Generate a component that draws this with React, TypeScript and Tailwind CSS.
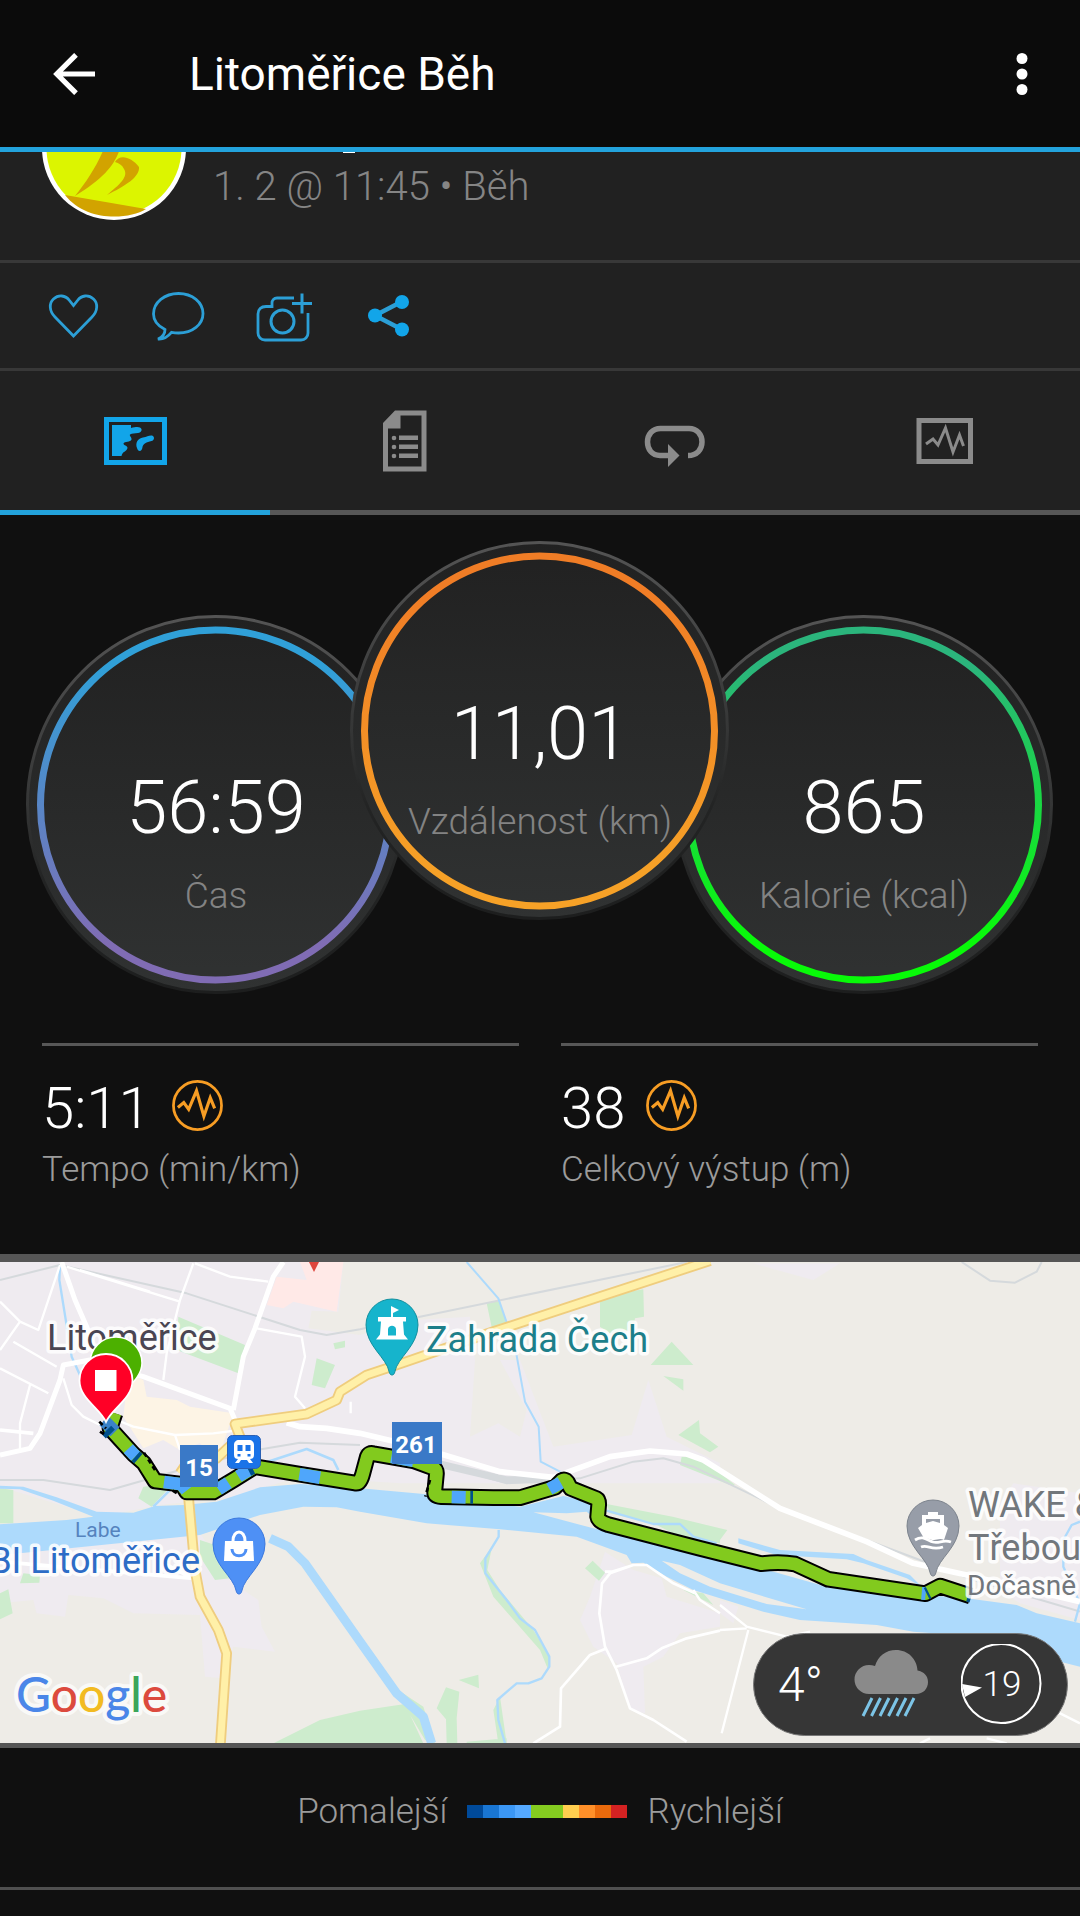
import type { ReactNode } from 'react';

interface GaugeProps {
    id: string;
    value: string;
    label: string;
    from: string;
    to: string;
    className: string;
}

const Gauge = ({ id, value, label, from, to, className }: GaugeProps) => (
    <div className={`relative h-[380px] w-[380px] shrink-0 text-center ${className}`}>
        <svg viewBox="0 0 380 380" className="absolute inset-0 h-full w-full" aria-hidden="true">
            <defs>
                <linearGradient id={`${id}-ring`} x1="0" y1="0" x2="0" y2="1">
                    <stop offset="0.1" stopColor={from} />
                    <stop offset="0.9" stopColor={to} />
                </linearGradient>
                <linearGradient id={`${id}-face`} x1="0" y1="0" x2="0" y2="1">
                    <stop offset="0" stopColor="#212121" />
                    <stop offset="1" stopColor="#303232" />
                </linearGradient>
                <linearGradient id={`${id}-rim`} x1="0" y1="0" x2="0" y2="1">
                    <stop offset="0" stopColor="#545454" />
                    <stop offset="0.5" stopColor="#353636" />
                    <stop offset="0.7" stopColor="#232424" />
                    <stop offset="1" stopColor="#1d1e1e" />
                </linearGradient>
            </defs>
            <circle cx="189.500" cy="189.500" r="188" fill={`url(#${id}-face)`} stroke={`url(#${id}-rim)`} strokeWidth="3" />
            <circle cx="189.500" cy="190" r="175" fill="none" stroke={`url(#${id}-ring)`} strokeWidth="7" />
        </svg>
        <div className="relative pt-[149px]">
            <div className="text-[74px] leading-[88px] text-white">{value}</div>
            <div className="mt-5 text-[37px] leading-[48px] whitespace-nowrap text-[#838383]">{label}</div>
        </div>
    </div>
);

const GraphBadge = () => (
    <svg viewBox="0 0 52 52" className="h-[51px] w-[51px]" fill="none" stroke="#f79d24">
        <circle cx="26" cy="26" r="24.500" strokeWidth="2.800" />
        <path d="M6 28l6-5 5 7 8-19 7.500 26 6.500-19 4.500 11" strokeWidth="3.200" />
    </svg>
);

const Stat = ({ value, label }: { value: string; label: string }) => (
    <div className="border-t-[3px] border-[#575757] pt-7">
        <div className="flex items-start gap-[21px]">
            <span className="text-[58px] leading-[68px] text-white">{value}</span>
            <button type="button" aria-label={`Graf: ${label}`} className="mt-1.5">
                <GraphBadge />
            </button>
        </div>
        <div className="mt-1.5 text-[35px] leading-[44px] text-[#9b9b9b]">{label}</div>
    </div>
);

const actions: { name: string; icon: ReactNode }[] = [
    {
        name: 'To se mi líbí',
        icon: (
            <path
                d="M29.500 50L11 31C5 25 5 17 9.500 13c5-4.500 12-4 16 1.500l4 5 4-5C37.500 9 44.500 8.500 49.500 13c4.500 4 4.500 12-1.500 18z"
                strokeWidth="2.8"
            />
        ),
    },
    {
        name: 'Komentář',
        icon: (
            <path
                d="M16 43.500C8 39.500 4.500 34 4.500 28 4.500 16.500 15.500 7.500 29.500 7.500S54 16.500 54 27.500 43.500 47 29.500 47c-3 0-5-.3-7-.7C19 50.500 14.500 53.500 9 53c5-2 7-5 7-9.500z"
                strokeWidth="2.8"
            />
        ),
    },
    {
        name: 'Přidat fotku',
        icon: (
            <>
                <path
                    d="M40 12H23c-3 0-5 2-5 5v3.500h-6c-5 0-8 3-8 7.500v19c0 4 3 7 7 7h36c4 0 7-3 7-7V27"
                    strokeWidth="2.8"
                />
                <circle cx="28.500" cy="35.500" r="11.500" strokeWidth="3" />
                <path d="M48 7.500v20M38 17.500h20" strokeWidth="3" />
            </>
        ),
    },
    {
        name: 'Sdílet',
        icon: (
            <>
                <path d="M16 29.500l27-14M16 29.500l27 14" strokeWidth="4.500" />
                <circle cx="16" cy="29.500" r="7" fill="#12a5e9" stroke="none" />
                <circle cx="43" cy="16" r="7" fill="#12a5e9" stroke="none" />
                <circle cx="43" cy="43.500" r="7" fill="#12a5e9" stroke="none" />
            </>
        ),
    },
];

const tabs: { name: string; icon: ReactNode }[] = [
    {
        name: 'Mapa',
        icon: (
            <g fill="#12a5e9">
                <rect x="6.500" y="10.500" width="58" height="43" fill="none" stroke="#12a5e9" strokeWidth="5" />
                <path d="M12 16h19v3c4-1 7-1.500 9-.5 3 1.500 1.500 5-2 5.500-3 .5-6 0-8 1.500-1 1 2 3 1.500 5-1 3-7 1.500-8 4 0 2 4 2 4 4.500-1 4-5 3-6 8h-9.500z" />
                <path d="M37 39c-2-5 1-10 6-10.500 4-.5 6-2.500 9-2 3 1 2.500 5-.5 5.500-5 1-8.500 3-9 6-.5 5-4.500 5-5.500 1z" />
            </g>
        ),
    },
    {
        name: 'Statistiky',
        icon: (
            <g fill="#8b8b8b">
                <path fillRule="evenodd" d="M25 1.500h31.500v61H13V14zM30.500 6.500v13H18v38h33.500v-51z" />
                <circle cx="24" cy="29" r="2.300" />
                <circle cx="24" cy="38" r="2.300" />
                <circle cx="24" cy="47" r="2.300" />
                <path d="M29 26.500h19V31H29zM29 35.500h19V40H29zM29 44.500h19V49H29z" />
            </g>
        ),
    },
    {
        name: 'Okruhy',
        icon: (
            <g>
                <path
                    d="M29 46.500h-9c-8 0-12.500-6-12.500-13.500s5-13.500 13-13.500h28.500c8 0 13 6 13 13.500s-5 13.500-14 13.500"
                    fill="none"
                    stroke="#8b8b8b"
                    strokeWidth="5.500"
                />
                <path d="M28 35L39.500 46.500 28 58z" fill="#8b8b8b" />
            </g>
        ),
    },
    {
        name: 'Grafy',
        icon: (
            <g fill="none" stroke="#8b8b8b">
                <rect x="9" y="11.500" width="51.500" height="41" strokeWidth="5" />
                <path d="M16 35l7-5 5 6 7.500-17L43 43l6.500-17 4 11" strokeWidth="3" />
            </g>
        ),
    },
];

const legendColors = [
    'bg-[#004a9a]',
    'bg-[#1976d3]',
    'bg-[#3b97f5]',
    'bg-[#55a9ff]',
    'bg-[#84cc20]',
    'bg-[#84cc20]',
    'bg-[#ffce4f]',
    'bg-[#ff9029]',
    'bg-[#ea6a0c]',
    'bg-[#d42222]',
];

const ROUTE =
    'M345 490L330 535 400 612 432 640 465 693 545 703 560 726 640 726 700 690 765 650 900 673 1065 699 Q1080 702 1088 672L1102 620 Q1107 608 1120 611L1240 632 1300 654 Q1311 659 1309 675L1304 728 Q1304 738 1325 740L1480 743 1560 743 1665 712 1685 692 Q1695 686 1702 696L1712 715 1790 746 Q1797 750 1796 765L1793 800 Q1795 815 1825 824L2100 895 2160 910 2283 941 Q2340 934 2385 942L2485 988 2777 1031 2820 1008 2912 1038';

const Terrain = () => (
    <g transform="translate(0 -12) scale(0.333333)" fill="none" strokeLinejoin="round">
        <rect x="0" y="36" width="3240" height="1450" fill="#eeece7" />

        {/* built-up areas */}
        <g fill="#efebf0">
            <path d="M0 36H1030L1015 185 935 182 925 235 1080 255 1240 210 1410 200 1425 330 1410 560 1495 520 1560 560 1580 480 1500 330 1560 330 1660 590 1895 555 1945 390 2000 560 2080 600 2160 640V700H1200L900 680 700 740 480 765 300 800 0 710z" />
            <path d="M0 915L600 850 700 1000 775 1050 785 1130 825 1205 700 1190 670 1285 615 1280 600 1095 400 1090 310 1045 205 1035 195 1100 110 1090 100 1050 0 1060z" />
            <path d="M1815 905L1900 960 1985 985 2000 1040 2160 1090 2160 1130 2040 1150 1990 1220 1930 1250 1935 1390 1890 1380 1850 1240 1780 1190 1740 1110 1770 1040z" />
            <path d="M2160 1050L2215 1070 2200 1120 2160 1090zM2260 40H2520L2440 90 2330 60zM3000 760L3040 700 3240 730V1110L3060 1060 3000 1020z" />
        </g>
        <path d="M900 36H1030L1010 185 880 155 850 175 800 165 830 80 920 90z" fill="#ffe9e7" />
        <path d="M385 370L430 390 440 440 530 450 570 470 700 490 690 520 650 640 600 580 540 600 490 570 430 595 370 500z" fill="#fdf4e5" />

        {/* parks */}
        <g fill="#cdeccd">
            <path d="M535 200L735 285 715 370 530 300zM950 325L1005 345 975 415 935 405zM1000 280L1035 272 1035 292 1005 298zM0 715L40 720V820H0zM430 710L520 700 455 770 415 745zM600 870L690 900 690 985 645 990 600 920zM0 1030L25 1018 38 1090 0 1108zM70 970L120 975 118 998 60 1000z" />
            <path d="M1460 160L1495 150 1525 230 1480 255zM1800 140L1930 118 1932 200 1905 205 1900 240 1830 250 1800 230zM1952 345L2015 275 2080 345zM1990 378L2050 388V422zM2035 555L2097 510 2100 550 2155 590 2130 607zM1755 955L1778 932 1815 968 1797 992zM1820 762L2018 800 2160 835V880L2040 860 1960 820 1830 790zM2045 620L2100 622 2205 705 2190 705 2040 645z" />
            <path d="M820 1480L960 1410 1080 1382 1215 1362 1270 1480zM1310 1375L1338 1312 1378 1325 1370 1405 1372 1480H1340L1338 1408zM1376 1290L1435 1274 1437 1315zM1180 1310L1270 1370 1305 1480 1275 1470zM1440 940L1476 890 1462 960 1500 1020 1600 1140 1650 1220 1645 1260 1620 1200 1550 1120 1480 1040zM1480 1380L1500 1340 1520 1480H1495zM2050 1020L2110 1030 2140 1065zM2160 835L2182 840 2160 870zM1400 1475L1520 1465V1480H1400z" />
        </g>

        {/* railway */}
        <g stroke="#d5d9dc" strokeWidth="6">
            <path d="M0 90L180 45 560 130 900 240 980 255 1080 238 1260 200 2060 36" />
            <path d="M0 690L130 690 330 720 540 660 770 600 900 578 1080 585" />
            <path d="M1080 600L1310 640 1520 700 1740 685 1900 635 1990 625 2080 650 2360 785 2600 870 2920 990 3240 1085" />
            <path d="M1310 640L1520 690 1660 688" strokeWidth="22" />
            <path d="M2885 36L2970 92 3045 98 3110 65 3125 36" />
        </g>

        {/* water */}
        <path
            fill="#addafc"
            d="M0 707L70 710 170 742 290 785 400 788 465 768 550 765 650 755 780 712 900 702 1080 715 1280 733 1400 752 1560 770 1690 738 1790 760 1840 830 2160 920 2480 1010 2900 1045 3050 1065 3110 1090 3240 1120V1250L3160 1230 2950 1160 2740 1145 2630 1125 2400 1110 2290 1085 2160 1045 2080 1020 2000 980 1930 938 1895 940 1880 915 1730 860 1500 838 1280 820 1080 785 1010 772 910 770 780 795 690 825 600 855 90 907 0 915V823L200 810 280 800 160 752 60 718 0 716z"
        />
        <path d="M1985 932L2040 945 2160 1000 2420 1078 2300 1062 2130 1010 2040 970zM1600 787L1700 790 1760 785 1830 845 1780 835z" fill="#eeece7" />
        <g stroke="#addafc">
            <path d="M810 865L865 890 915 940 1080 1175 1190 1330 1270 1400 1295 1480" strokeWidth="27" />
            <path d="M180 45L178 90 215 320 260 420" strokeWidth="7" />
            <path d="M1400 36L1495 145 1545 290 1575 455 1616 530 1622 635 1680 665 1710 690" strokeWidth="6" />
            <path d="M1496 840V860L1456 925V970L1520 1050 1560 1105 1605 1140 1648 1220V1250L1625 1285 1585 1300 1550 1300 1492 1350 1495 1410 1515 1480" strokeWidth="7" />
            <path d="M1820 782L1960 822 2040 822 2080 860 2150 880" strokeWidth="7" />
            <path d="M790 640L920 597 1000 630 1015 660M460 770L520 710" strokeWidth="8" />
            <path d="M3240 815L3215 825 3190 870V950L3240 1060 3225 1115" strokeWidth="7" />
        </g>
        <path d="M2215 865L2340 900 2560 912 2600 930 2730 975 2765 1010 2720 985 2590 940 2540 928 2330 915 2215 880z" fill="#addafc" />

        {/* white streets */}
        <g stroke="#fff">
            <g strokeWidth="7">
                <path d="M180 45L115 240 60 215 0 155M60 215L0 300M40 275L170 350M90 405L60 520V600M0 355L145 430M200 50L540 155M450 125L240 60M580 40L540 150 500 310 490 390M585 40L690 80 805 95M770 235L905 260 915 320 885 440 915 475M190 385L215 465 250 500 300 525M350 510L400 530 525 555 640 550 720 540M525 555L540 600M1052 455V490" />
                <path d="M2160 1065L2240 1130 2360 1160 2430 1145M2245 1140L2165 1450M2080 1020L2100 1050 2160 1090M2160 1140L2240 1135M3040 1410L3080 1370 3170 1385 3240 1420M2760 1480L2790 1465M2960 1465L3020 1480" />
            </g>
            <g strokeWidth="11">
                <path d="M1815 965L1835 965 1900 945 1940 945 2020 1000 2085 1030M1900 945L1830 970 1806 1000 1798 1090 1815 1190 1850 1260 1890 1375 1960 1410 2060 1475M1815 1197L1770 1215 1683 1315 1680 1430 1600 1480M1848 1250L1940 1225 1985 1195 2060 1165 2160 1142" strokeWidth="8" />
                <path d="M500 945L580 985 0 935M0 540L100 550" />
            </g>
            <path d="M185 36L225 150 260 230 300 345 430 380 690 475 705 510M270 330L190 345 180 390 120 550 90 595 0 615M850 36L820 80 765 235 730 320 700 480" strokeWidth="15" />
            <path d="M860 518L900 530 980 535 1080 550 1250 590 1500 665 1660 682 1830 620 1950 603 2060 612 2110 630 2340 775 2600 875 2740 940 2900 975 3240 1055" strokeWidth="17" />
        </g>

        {/* main roads */}
        <g stroke="#efcd7e" strokeWidth="32">
            <path d="M565 735L585 960 600 1040 655 1140 680 1210 660 1500" />
            <path d="M540 670L560 640 650 625 720 560 705 522 920 492 1010 450 1020 425 1100 375 1190 345 1480 245 1800 140 2130 32" />
        </g>
        <g stroke="#fff0a8" strokeWidth="21">
            <path d="M565 735L585 960 600 1040 655 1140 680 1210 660 1500" />
            <path d="M540 670L560 640 650 625 720 560 705 522 920 492 1010 450 1020 425 1100 375 1190 345 1480 245 1800 140 2130 32" />
        </g>
    </g>
);

const Route = () => (
    <g transform="translate(0 -12) scale(0.333333)" fill="none" strokeLinejoin="round">
        <path d={ROUTE} stroke="#000" strokeWidth="50" />
        <path d={ROUTE} stroke="#82ca1e" strokeWidth="38" />
        <g stroke="#4fa6fb" strokeWidth="38">
            <path d="M385 596L407 619M492 696L545 703 560 722M655 718L685 698M715 679L750 658M898 673L960 683M1174 620L1240 632M1355 741L1397 742M1648 717L1682 698M2765 1030L2777 1031" />
            <path d="M312 512L345 545" stroke="#3a82c9" />
        </g>
        <g stroke="#00508c" strokeWidth="38">
            <path d="M320 541L331 552M407 619L415 626M1411 742L1419 742M2780 1031L2786 1028" />
            <path d="M745 660L757 654M2904 1036L2914 1039" />
        </g>
        <path d="M298 515L318 535M300 545L312 553M432 608L466 662M518 722L540 735M1290 690L1276 740" stroke="#000" strokeWidth="8" strokeDasharray="14 10" />
    </g>
);

const Pin = ({ x, y, fill, rim, children }: { x: number; y: number; fill: string; rim: string; children: ReactNode }) => (
    <g transform={`translate(${x} ${y})`}>
        <path
            d="M0 0C-1.500 0-2.300-1-2.800-3-5-17-26-29-26-50a26 26 0 0 1 52 0C26-29 5-17 2.800-3 2.300-1 1.500 0 0 0z"
            fill={fill}
            stroke={rim}
        />
        {children}
    </g>
);

const ActivityMap = () => (
    <svg viewBox="0 0 1080 481" className="block w-full" role="img" aria-label="Mapa trasy">
        <Terrain />
        <path d="M309 0h10l-5 10z" fill="#de453c" />

        <g stroke="#fff" strokeOpacity="0.85" strokeWidth="7" strokeLinejoin="round" paintOrder="stroke" fontSize="36">
            <text x="47" y="88" fill="#4a4552">Litoměřice</text>
            <text x="426" y="90" fill="#1d7f8a">Zahrada Čech</text>
            <text x="200" y="311" textAnchor="end" fill="#2d6cc6">OBI Litoměřice</text>
            <text x="968" y="255" fill="#72777c">WAKE &amp;</text>
        </g>
        <text x="75" y="275" fontSize="21" fill="#5583be">Labe</text>

        <Route />

        <g stroke="#fff" strokeOpacity="0.85" strokeWidth="7" strokeLinejoin="round" paintOrder="stroke">
            <text x="968" y="298" fontSize="36" fill="#72777c">Třeboutice</text>
            <text x="967" y="333" fontSize="28" fill="#72777c">Dočasně</text>
        </g>

        {/* start and finish */}
        <path
            d="M116 142C113 130 90 119 90 101a26 26 0 0 1 52 0c0 18-23 29-26 41z"
            fill="#4cb000"
            stroke="#fff"
            strokeWidth="1.500"
        />
        <path
            d="M106 160C100 146 79.500 137 79.500 118.500a26.500 26.500 0 0 1 53 0c0 18.500-20.500 27.500-26.500 41.500z"
            fill="#ff0026"
            stroke="#fff"
            strokeWidth="1.800"
        />
        <rect x="95" y="108" width="21.500" height="21" fill="#fff" />

        {/* places */}
        <Pin x={392} y={113} fill="#16b4cc" rim="#12909f">
            <path
                fillRule="evenodd"
                d="M-1-69l8 4-6 3v4h13v4.500h-3l1 13 4 5h-32l4-5 1-13h-3V-58H-1zM-4-39.500h8v-6c0-5-8-5-8 0z"
                fill="#fff"
            />
        </Pin>
        <Pin x={239} y={332} fill="#4e90f5" rim="#3b78dd">
            <path d="M-14-53h28l1 20h-30z" fill="#fff" />
            <path d="M-6-53c0-12 12-12 12 0" fill="none" stroke="#fff" strokeWidth="3" />
            <path d="M-7-45c0 9 14 9 14 0" fill="none" stroke="#4e90f5" strokeWidth="3" />
        </Pin>
        <Pin x={933} y={314} fill="#979da8" rim="#7c838d">
            <path
                fillRule="evenodd"
                d="M-5-64H5v3h6v10l4 3-4 12c-4-2-7 0-10 0-4 0-6-3-9 0l-7-12 4-3v-10h6zM-7-57v4L0-55l7 2v-4z"
                fill="#fff"
            />
            <path d="M-18-36c8-5 12 0 18 2s10-3 18 0M-12-29c7-3 10 4 22 0" fill="none" stroke="#fff" strokeWidth="2.800" />
        </Pin>

        {/* transit and road shields */}
        <rect x="227.500" y="173.500" width="33" height="33" rx="5" fill="#1a73e8" stroke="#2a5fb4" />
        <path
            fillRule="evenodd"
            d="M239 178h10c3 0 5 2 5 5v10c0 3-2 4-4 4l3 4h-4l-2-3h-6l-2 3h-4l3-4c-2 0-4-1-4-4v-10c0-3 2-5 5-5zM237.500 183v6h5v-6zM245.500 183v6h5v-6zM237.500 192v2.500h3V192zM247.500 192v2.500h3V192z"
            fill="#fff"
        />
        <g fill="#3a79c7">
            <path d="M180 183h38v42h-38zM392 160h50v42h-50z" />
        </g>
        <g fill="#fff" fontSize="24" fontWeight="700" textAnchor="middle">
            <text x="199" y="214">15</text>
            <text x="416" y="191">261</text>
        </g>

        <text
            x="16"
            y="450"
            fontSize="48"
            className="font-['Lato']"
            fontWeight="500"
            stroke="#fff"
            strokeOpacity="0.7"
            strokeWidth="8"
            strokeLinejoin="round"
            paintOrder="stroke"
        >
            <tspan fill="#4a86e8">G</tspan>
            <tspan fill="#dc4a3e">o</tspan>
            <tspan fill="#f2bb22">o</tspan>
            <tspan fill="#4a86e8">g</tspan>
            <tspan fill="#3ba55a">l</tspan>
            <tspan fill="#dc4a3e">e</tspan>
        </text>
    </svg>
);

const Weather = () => (
    <div className="absolute right-3 bottom-[7px] flex h-[103px] w-[315px] items-center justify-between rounded-full border border-[#777] bg-[#363636] px-6 text-white">
        <span className="text-[48px] leading-[56px]">4°</span>
        <svg viewBox="0 0 76 70" className="h-[70px] w-[76px]" aria-hidden="true">
            <path d="M15 44a14.500 14.500 0 0 1 0-29c2 0 4 .3 6 1C24 6 32 0 42 0c12 0 21 9 21.500 20.500C70 21.500 74 26 74 32c0 7-5 12-12 12z" fill="#8a8a8a" />
            <path d="M18 48L9 66M26.500 48l-9 18M35 48l-9 18M43.500 48l-9 18M52 48l-9 18M60 48l-9 18" stroke="#7cc4e6" strokeWidth="3" />
        </svg>
        <div className="relative flex h-[82px] w-[82px] items-center justify-center">
            <svg viewBox="0 0 82 82" className="absolute inset-0 h-full w-full" aria-hidden="true">
                <circle cx="40" cy="39.500" r="39.500" fill="none" stroke="#fff" strokeWidth="2" />
                <path d="M1 40l20 3.500L4 53z" fill="#fff" />
            </svg>
            <span className="relative text-[35px] leading-[44px]">19</span>
        </div>
    </div>
);

export default function App() {
    return (
        <div className="min-h-screen bg-[#101010] font-['Roboto',sans-serif] font-light">
            <header className="flex h-[152px] items-center border-b-[5px] border-[#23a3dc] bg-[#0b0b0b] text-white">
                <button type="button" aria-label="Zpět" className="ml-11 flex h-[60px] w-[60px] items-center justify-center">
                    <svg viewBox="0 0 42 42" className="h-[42px] w-[42px]" fill="none" stroke="#fff" strokeWidth="5.200">
                        <path d="M42 21H4M23 1.800L3.800 21 23 40.200" />
                    </svg>
                </button>
                <h1 className="flex-1 pl-[85px] text-[46px] leading-[56px] font-normal">Litoměřice Běh</h1>
                <button type="button" aria-label="Další možnosti" className="mr-7 flex h-[60px] w-[60px] items-center justify-center">
                    <svg viewBox="0 0 12 44" className="h-11 w-3" fill="#fff">
                        <circle cx="6" cy="6.500" r="5.500" />
                        <circle cx="6" cy="22" r="5.500" />
                        <circle cx="6" cy="37.500" r="5.500" />
                    </svg>
                </button>
            </header>

            <section className="bg-[#212121]">
                <div className="flex h-[111px] items-start overflow-hidden border-b-[3px] border-[#383838] pl-[42px]">
                    <svg viewBox="0 0 144 144" className="-mt-[76px] h-36 w-36 shrink-0" role="img" aria-label="Běh">
                        <circle cx="72" cy="72" r="72" fill="#fff" />
                        <circle cx="72" cy="72" r="67.500" fill="#dcf500" />
                        <path d="M63 70h16c-6 18-14 30-46 50 12-15 22-30 30-50z" fill="#d2a300" />
                        <path d="M73 86c4-8 16-6 24 5 1 10-14 19-32 28 12-10 22-18 17-26-2-4-5-6-9-7z" fill="#d2a300" />
                        <path d="M23 119l81 14C86 144 44 146 23 119z" fill="#d2a300" />
                    </svg>
                    <div className="pl-[27px]">
                        <div className="ml-[130px] h-px w-3 bg-white" />
                        <p className="mt-2.5 text-[40px] leading-[48px] text-[#858585]">1. 2 @ 11:45 • Běh</p>
                    </div>
                </div>

                <div className="flex h-[108px] border-b-[3px] border-[#383838] pl-[21px]">
                    {actions.map((action) => (
                        <button
                            key={action.name}
                            type="button"
                            aria-label={action.name}
                            className="flex w-[105px] items-center justify-center"
                        >
                            <svg viewBox="0 0 60 60" className="h-[60px] w-[60px]" fill="none" stroke="#2c9fd6">
                                {action.icon}
                            </svg>
                        </button>
                    ))}
                </div>

                <nav className="grid grid-cols-4">
                    {tabs.map((tab, i) => (
                        <button
                            key={tab.name}
                            type="button"
                            aria-label={tab.name}
                            className={`flex h-36 items-center justify-center border-b-[5px] ${i === 0 ? 'border-[#23a3dc]' : 'border-[#575757]'}`}
                        >
                            <svg viewBox="0 0 70 64" className="h-16 w-[70px]">
                                {tab.icon}
                            </svg>
                        </button>
                    ))}
                </nav>
            </section>

            <section className="flex justify-center pt-[26px]">
                <Gauge id="time" value="56:59" label="Čas" from="#30a0d8" to="#806cb4" className="mt-[74px] -mr-14" />
                <Gauge id="distance" value="11,01" label="Vzdálenost (km)" from="#f07d26" to="#f6a127" className="z-10" />
                <Gauge id="calories" value="865" label="Kalorie (kcal)" from="#2bb57c" to="#08fa08" className="mt-[74px] -ml-14" />
            </section>

            <section className="mt-12 grid grid-cols-2 gap-[42px] px-[42px] pb-[62px]">
                <Stat value="5:11" label="Tempo (min/km)" />
                <Stat value="38" label="Celkový výstup (m)" />
            </section>

            <section className="relative overflow-hidden border-t-8 border-b-[5px] border-[#565656] font-normal">
                <ActivityMap />
                <div className="font-light">
                    <Weather />
                </div>
            </section>

            <section className="flex h-[142px] items-center justify-center gap-5 border-b-[3px] border-[#4f4f4f] pb-3 text-[35px] leading-[44px] text-[#9b9b9b]">
                <span>Pomalejší</span>
                <div className="flex">
                    {legendColors.map((color, i) => (
                        <span key={i} className={`h-[13px] w-4 ${color}`} />
                    ))}
                </div>
                <span>Rychlejší</span>
            </section>
        </div>
    );
}
